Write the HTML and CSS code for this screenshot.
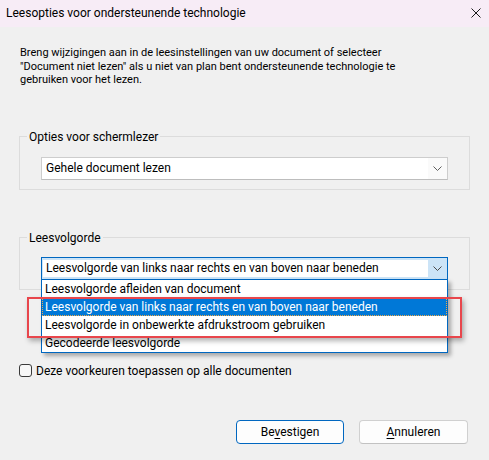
FILE: index.html
```html
<!DOCTYPE html>
<html lang="nl">
<head>
<meta charset="utf-8">
<title>Leesopties voor ondersteunende technologie</title>
<link rel="stylesheet" href="styles.css">
</head>
<body>
<div class="dialog">
  <header class="titlebar">
    <span class="title">Leesopties voor ondersteunende technologie</span>
    <button class="close" aria-label="Sluiten">
      <svg width="10" height="10" viewBox="0 0 10 10"><path d="M0.5 0.5 L9.5 9.5 M9.5 0.5 L0.5 9.5" stroke="#1b1b1b" stroke-width="1" fill="none"/></svg>
    </button>
  </header>

  <main class="content">
    <p class="intro">Breng wijzigingen aan in de leesinstellingen van uw document of selecteer<br>"Document niet lezen" als u niet van plan bent ondersteunende technologie te<br>gebruiken voor het lezen.</p>

    <fieldset class="group">
      <legend>Opties voor schermlezer</legend>
      <div class="combo">
        <span class="combo-text">Gehele document lezen</span>
        <span class="combo-arrow">
          <svg width="9" height="5" viewBox="0 0 9 5"><polyline points="0.5,0.5 4.5,4.5 8.5,0.5" fill="none" stroke="#5f5f5f" stroke-width="1"/></svg>
        </span>
      </div>
    </fieldset>

    <fieldset class="group group-order">
      <legend>Leesvolgorde</legend>
      <div class="combo combo-open">
        <span class="combo-text">Leesvolgorde van links naar rechts en van boven naar beneden</span>
        <span class="combo-arrow">
          <svg width="9" height="5" viewBox="0 0 9 5"><polyline points="0.5,0.5 4.5,4.5 8.5,0.5" fill="none" stroke="#4a4a4a" stroke-width="1"/></svg>
        </span>
        <ul class="listbox">
          <li class="option">Leesvolgorde afleiden van document</li>
          <li class="option option-selected">Leesvolgorde van links naar rechts en van boven naar beneden</li>
          <li class="option">Leesvolgorde in onbewerkte afdrukstroom gebruiken</li>
          <li class="option">Gecodeerde leesvolgorde</li>
        </ul>
      </div>
    </fieldset>

    <label class="check">
      <span class="check-box"></span>
      <span>Deze voorkeuren toepassen op alle documenten</span>
    </label>

    <div class="actions">
      <button class="btn btn-default">Be<u>v</u>estigen</button>
      <button class="btn"><u>A</u>nnuleren</button>
    </div>
  </main>

  <div class="callout"></div>
</div>
</body>
</html>
```

FILE: styles.css
```css
html, body {
  margin: 0;
  padding: 0;
}

body {
  background: #f0f0f0;
  font-family: Roboto, "Noto Sans", "DejaVu Sans", sans-serif;
  font-size: 12px;
  color: #000;
}

.dialog {
  position: relative;
  width: 489px;
  height: 460px;
  overflow: hidden;
}

/* window caption */
.titlebar {
  height: 27px;
  box-sizing: border-box;
  padding: 0 8px 1px 6px;
  background: #f7ecf6;
  display: flex;
  align-items: center;
  justify-content: space-between;
  font-size: 12px;
}

.close {
  width: 10px;
  height: 10px;
  padding: 0;
  border: 0;
  background: none;
  display: flex;
}

.content {
  padding: 0 19px;
}

.intro {
  margin: 19px 0 0 1px;
  font-size: 11px;
  line-height: 13.6px;
}

/* group boxes */
.group {
  margin: 42px 0 0;
  padding: 0 0 9px;
  border: 1px solid #dcdcdc;
  min-width: 0;
}

.group-order {
  margin-top: 40px;
}

.group legend {
  margin-left: 7px;
  padding: 0 2px;
  line-height: 16px;
}

/* combo boxes */
.combo {
  position: relative;
  margin: 12px 21px 0;
  height: 23px;
  box-sizing: border-box;
  border: 1px solid #cdcdcd;
  border-bottom-color: #bdbdbd;
  background: #fff;
  display: flex;
  align-items: stretch;
}

.group-order .combo {
  margin-top: 11px;
}

.combo-text {
  flex: 1;
  padding-left: 4px;
  display: flex;
  align-items: center;
  white-space: nowrap;
}

.combo-arrow {
  width: 19px;
  display: flex;
  align-items: center;
  justify-content: center;
  background: #fafafa;
}

.combo-open {
  border-color: #0067c0;
  background: #cce4f7;
  padding: 2px 0 2px 1px;
}

.combo-open .combo-text {
  background: #fff;
  padding-left: 3px;
}

.combo-open .combo-arrow {
  background: #cce4f7;
}

/* dropped-down list */
.listbox {
  position: absolute;
  top: 100%;
  left: -1px;
  right: -1px;
  margin: 0;
  padding: 0;
  list-style: none;
  background: #fff;
  border: 1px solid #0067c0;
  box-shadow: 3px 3px 4px rgba(0, 0, 0, 0.3);
  z-index: 2;
}

.option {
  height: 18px;
  line-height: 18px;
  padding-left: 3px;
  white-space: nowrap;
}

.option-selected {
  background: #0078d7;
  color: #fff;
  outline: 1px dotted #f0a847;
  outline-offset: -1px;
}

/* checkbox */
.check {
  margin-top: 73px;
  display: flex;
  align-items: center;
  gap: 4px;
  line-height: 16px;
}

.check-box {
  width: 13px;
  height: 13px;
  box-sizing: border-box;
  border: 1px solid #3a3a3a;
  border-radius: 3px;
  background: #f7f7f7;
}

/* buttons */
.actions {
  margin: 41px 2px 0 0;
  display: flex;
  justify-content: flex-end;
  gap: 15px;
}

.btn {
  width: 109px;
  height: 24px;
  padding: 0;
  box-sizing: border-box;
  border: 1px solid #d0d0d0;
  border-bottom-color: #c2c2c2;
  border-radius: 4px;
  background: #fdfdfd;
  font: inherit;
  color: #000;
}

.btn-default {
  width: 108px;
  border-color: #0067c0;
}

.btn u {
  text-underline-offset: 2px;
}

/* red highlight frame laid over the list */
.callout {
  position: absolute;
  left: 27px;
  top: 297px;
  width: 435px;
  height: 41px;
  box-sizing: border-box;
  border: 2px solid #e8464c;
  box-shadow: 2px 3px 5px rgba(0, 0, 0, 0.3);
  z-index: 3;
}
```
